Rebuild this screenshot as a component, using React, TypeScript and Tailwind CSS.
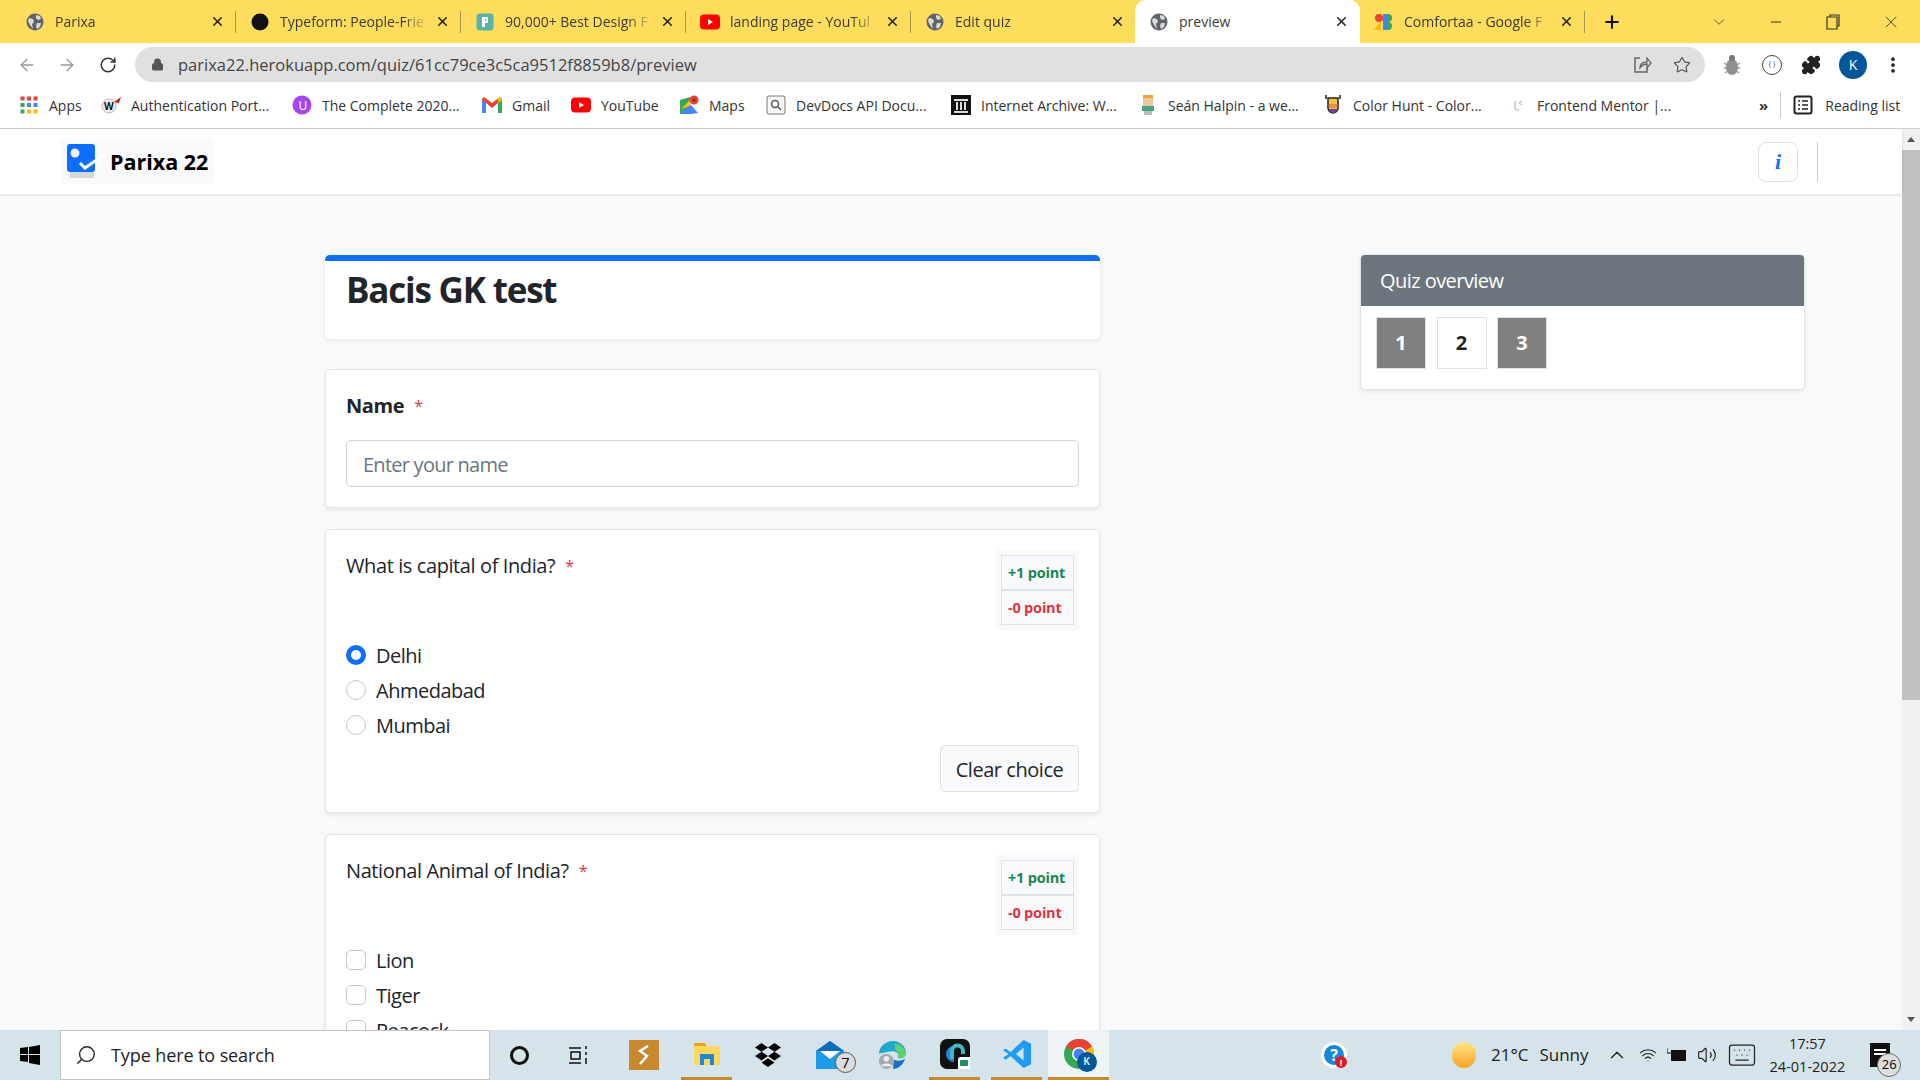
import React from "react";
import { ArrowLeft, ArrowRight, RotateCw, Lock, Star, Puzzle, MoreVertical, X, Plus, ChevronDown, Minus, Search, ChevronUp, Wifi, Volume2, Keyboard } from "lucide-react";

const Globe = () => (
  <svg width="18" height="18" viewBox="0 0 18 18"><circle cx="9" cy="9" r="8.5" fill="#5f6368" /><path d="M3 5l4 1 1 3-2 2 1 5-3-4-2-4zM10 2l4 1 1 3-3 1-2-2zM11 10l4 0-1 4-3 2-1-3z" fill="#d9d9d9" /></svg>
);
const tabs = [
  { t: "Parixa", i: <Globe />, },
  { t: "Typeform: People-Frie", i: <svg width="18" height="18"><circle cx="9" cy="9" r="8.5" fill="#111" /></svg> },
  { t: "90,000+ Best Design F", i: <svg width="18" height="18"><rect x="0.5" y="0.5" width="17" height="17" rx="3" fill="#58b5a5" /><path d="M6 4h6v6H9v4H6zM9 6v2h1V6z" fill="#fff" /></svg> },
  { t: "landing page - YouTul", i: <svg width="20" height="18"><rect width="20" height="15" y="1.5" rx="4" fill="#f00" /><path d="M8 6l5 3-5 3z" fill="#fff" /></svg> },
  { t: "Edit quiz", i: <Globe /> },
];

function Tab({ t, i }: { t: string; i: React.ReactNode }) {
  return (
    <div className="flex h-full w-[225px] shrink-0 items-center py-[11px] pl-[14px] pr-[11px]">
      <div className="flex w-[20px] shrink-0 justify-center">{i}</div>
      <div className="ml-[10px] flex-1 overflow-hidden whitespace-nowrap pb-[1px] text-[14px] text-[#3a3a3a] [mask-image:linear-gradient(90deg,#000_82%,transparent_100%)]">{t}</div>
      <X size={15} strokeWidth={2.5} className="ml-[6px] shrink-0 text-[#222]" />
    </div>
  );
}
function TabSep() { return <div className="-ml-px h-[22px] w-px shrink-0 bg-[#a99650]" />; }

const bookmarks: { t: string; w: string; i: React.ReactNode }[] = [
  { t: "Apps", w: "w-[82px]", i: <svg width="18" height="18" viewBox="0 0 18 18">{[0,1,2].map(r=>[0,1,2].map(c=><rect key={r+"-"+c} x={c*6.5+0.5} y={r*6.5+0.5} width="4" height="4" fill={["#ea4335","#ea4335","#ea4335","#34a853","#4285f4","#4285f4","#34a853","#fbbc05","#fbbc05"][r*3+c]} />))}</svg> },
  { t: "Authentication Port...", w: "w-[191px]", i: <svg width="20" height="18" viewBox="0 0 20 18"><circle cx="8" cy="10" r="7" fill="#eee" stroke="#bbb" /><text x="3" y="14" fontSize="10" fontWeight="700" fill="#111">W</text><path d="M13 6l7-5-2 6z" fill="#c81e1e" /></svg> },
  { t: "The Complete 2020...", w: "w-[190px]", i: <svg width="20" height="20"><circle cx="10" cy="10" r="9.5" fill="#a445ed" /><text x="6.5" y="15" fontSize="12" fill="#fff">U</text></svg> },
  { t: "Gmail", w: "w-[89px]", i: <svg width="20" height="16" viewBox="0 0 20 16"><path d="M0 2v14h4V6l6 5 6-5v10h4V2l-2-2-8 6-8-6z" fill="#ea4335" /><path d="M0 3v13h4V6z" fill="#4285f4" /><path d="M20 3v13h-4V6z" fill="#34a853" /><path d="M16 6l4-3V1l-2-1-2 1.500z" fill="#fbbc05" /></svg> },
  { t: "YouTube", w: "w-[108px]", i: <svg width="20" height="16"><rect width="20" height="15" y="0.5" rx="4" fill="#f00" /><path d="M8 5l5 3-5 3z" fill="#fff" /></svg> },
  { t: "Maps", w: "w-[87px]", i: <svg width="20" height="20" viewBox="0 0 20 20"><path d="M1 5l10-3v16l-10 1z" fill="#34a853" /><path d="M1 19L11 9l8 9-7 1z" fill="#4285f4" /><path d="M2 14L11 5v6z" fill="#fbbc05" /><circle cx="15" cy="5" r="4.500" fill="#ea4335" /><circle cx="15" cy="5" r="1.500" fill="#8b1a12" /></svg> },
  { t: "DevDocs API Docu...", w: "w-[185px]", i: <svg width="20" height="20" viewBox="0 0 20 20"><rect x="1" y="1" width="18" height="18" rx="2" fill="#fafafa" stroke="#777" /><circle cx="9" cy="9" r="3.500" fill="none" stroke="#555" strokeWidth="1.500" /><path d="M12 12l3 3" stroke="#555" strokeWidth="1.500" /></svg> },
  { t: "Internet Archive: W...", w: "w-[187px]", i: <svg width="20" height="20" viewBox="0 0 20 20"><rect width="20" height="20" fill="#111" /><path d="M3 4h14v2H3zM5 7h2v8H5zM9 7h2v8H9zM13 7h2v8h-2zM3 16h14v2H3z" fill="#ddd" /></svg> },
  { t: "Seán Halpin - a we...", w: "w-[185px]", i: <svg width="20" height="20" viewBox="0 0 20 20"><rect x="5" y="0" width="10" height="3" fill="#f3a23a" /><rect x="5" y="3" width="10" height="8" fill="#f0c6a0" /><rect x="4" y="11" width="12" height="5" fill="#43a47e" /><rect x="6" y="16" width="8" height="4" fill="#bbb" /></svg> },
  { t: "Color Hunt - Color...", w: "w-[184px]", i: <svg width="20" height="20" viewBox="0 0 20 20"><path d="M5 3h10v10a5 5 0 0 1-10 0z" fill="#f5c33b" stroke="#222" strokeWidth="1.500" /><path d="M5.800 9h8.400v4H5.800z" fill="#f08a4b" /><path d="M6 14h8a4 4 0 0 1-8 0z" fill="#6c3f99" /><path d="M3 0v4M17 0v4" stroke="#222" strokeWidth="1.500" /></svg> },
  { t: "Frontend Mentor |...", w: "w-[252px]", i: <svg width="20" height="20" viewBox="0 0 20 20"><path d="M8 6v8a5 5 0 0 0 4 1" fill="none" stroke="#b9c8d9" strokeWidth="1.500" /><path d="M12 8l3-2M12 8l3 2" stroke="#9fb6ce" /></svg> },
];

function Req() { return <span className="ml-[10px] align-top text-[16px] font-normal text-[#dc3545]">*</span>; }

function Points() {
  return (
    <div className="flex h-[80px] w-[83px] shrink-0 flex-col justify-center bg-[#f8f9fa] px-[5px] text-[14.5px] font-bold tracking-[-0.2px]">
      <div className="flex h-[35px] items-center border border-[#dee2e6] pl-[6px] whitespace-nowrap text-[#198754]">+1 point</div>
      <div className="flex h-[35px] items-center border border-[#dee2e6] pl-[6px] whitespace-nowrap text-[#dc3545]">-0 point</div>
    </div>
  );
}

function Opt({ kind, label, checked }: { kind: "r" | "c"; label: string; checked?: boolean }) {
  return (
    <div className="flex h-[35px] items-center text-[20px] tracking-[-0.5px] text-[#212529]">
      {kind === "r" ? (
        checked ? <span className="h-[20px] w-[20px] rounded-full border-[5px] border-[#0d6efd] bg-white" /> : <span className="h-[20px] w-[20px] rounded-full border border-[#c4c8cc] bg-white" />
      ) : (
        <span className="h-[20px] w-[20px] rounded-[5px] border border-[#c4c8cc] bg-white" />
      )}
      <span className="ml-[10px] pt-[2px]">{label}</span>
    </div>
  );
}

function QHead({ q }: { q: string }) {
  return (
    <div className="flex justify-between">
      <div className="pt-[2px] text-[20px] leading-[28px] tracking-[-0.4px] text-[#212529]">{q}<Req /></div>
      <Points />
    </div>
  );
}

const cardCls = "rounded-[5px] border border-[#e1e4e8] bg-white px-[20px] shadow-[0_2px_4px_rgba(0,0,0,0.075)]";

function NumBox({ n, dark }: { n: number; dark?: boolean }) {
  return (
    <div className={dark ? "flex h-[52px] w-[50px] items-center justify-center border border-[#dee2e6] bg-[#808080] text-[20px] font-bold text-white" : "flex h-[52px] w-[50px] items-center justify-center border border-[#dee2e6] bg-white text-[20px] font-bold text-[#212529]"}>{n}</div>
  );
}

export default function App() {
  return (
    <div className="flex h-screen w-full flex-col overflow-hidden bg-white font-['Open_Sans',sans-serif] text-[#212529]">
      {/* tab strip */}
      <div className="flex h-[43px] shrink-0 items-center bg-[#ffdd5c] pl-[11px]">
        {tabs.map((t, idx) => (
          <React.Fragment key={t.t}>
            <Tab t={t.t} i={t.i} />
            {idx < 4 ? <TabSep /> : null}
          </React.Fragment>
        ))}
        <div className="-ml-[1px] flex h-full w-[225px] shrink-0 items-center rounded-t-[10px] bg-white pl-[14px] pr-[11px]">
          <div className="flex w-[20px] shrink-0 justify-center"><Globe /></div>
          <div className="ml-[10px] flex-1 pb-[1px] text-[14px] text-[#3a3a3a]">preview</div>
          <X size={15} strokeWidth={2.5} className="text-[#222]" />
        </div>
        <Tab t="Comfortaa - Google F" i={<svg width="20" height="18" viewBox="0 0 20 18"><circle cx="5" cy="5" r="4" fill="#ea4335" /><path d="M0 17L7 8v9z" fill="#fbbc05" /><path d="M9 1h5v16H9z" fill="#4285f4" /><path d="M14 1a4 4 0 0 1 0 8zM14 9a4 4 0 0 1 0 8z" fill="#34a853" /></svg>} />
        <TabSep />
        <Plus size={20} strokeWidth={2.5} className="ml-[17px] text-[#111]" />
        <div className="ml-auto flex items-center text-[#333]">
          <ChevronDown size={18} strokeWidth={1} className="mr-[40px]" />
          <Minus size={16} strokeWidth={1.5} className="mr-[41px]" />
          <svg width="16" height="16" viewBox="0 0 16 16" className="mr-[40px]"><path d="M5 3V1h9v11h-2M2 3h10v12H2z" fill="none" stroke="#333" strokeWidth="1.200" /></svg>
          <X size={20} strokeWidth={1} className="mr-[19px]" />
        </div>
      </div>
      {/* toolbar */}
      <div className="flex h-[43px] shrink-0 items-center bg-white">
        <ArrowLeft size={20} strokeWidth={1.6} className="ml-[17px] text-[#9a9a9a]" />
        <ArrowRight size={20} strokeWidth={1.6} className="ml-[20px] text-[#9a9a9a]" />
        <RotateCw size={18} strokeWidth={2} className="ml-[22px] text-[#333]" />
        <div className="ml-[18px] flex h-[35px] w-[1570px] items-center rounded-full bg-[#e0e0e0] pl-[16px] pr-[14px]">
          <Lock size={13} strokeWidth={2.5} fill="#555" className="text-[#555]" />
          <span className="ml-[14px] pt-[2px] text-[16.5px] text-[#444]">parixa22.herokuapp.com/quiz/61cc79ce3c5ca9512f8859b8/preview</span>
          <svg width="20" height="20" viewBox="0 0 20 20" className="ml-auto"><path d="M8 3H3v14h12v-4" fill="none" stroke="#666" strokeWidth="1.500" /><path d="M8 13c0-4 3-6 7-6V3l4 5-4 5V9c-3 0-5 1-7 4z" fill="none" stroke="#666" strokeWidth="1.300" /></svg>
          <Star size={18} strokeWidth={1.6} className="ml-[21px] text-[#555]" />
        </div>
        <svg width="20" height="22" viewBox="0 0 20 22" className="ml-[17px]"><ellipse cx="10" cy="13" rx="6" ry="8" fill="#8f8f8f" /><circle cx="10" cy="4" r="3" fill="#777" /><path d="M2 9l3 2M2 14h3M3 19l3-2M18 9l-3 2M18 14h-3M17 19l-3-2" stroke="#999" strokeWidth="1.500" /></svg>
        <div className="ml-[20px] flex h-[20px] w-[20px] items-center justify-center rounded-full border border-[#444] text-[7px] text-[#444]">{"{ }"}</div>
        <Puzzle size={20} fill="#222" className="ml-[19px] text-[#222]" />
        <div className="ml-[18px] flex h-[28px] w-[28px] items-center justify-center rounded-full bg-[#01579b] text-[14px] text-white">K</div>
        <MoreVertical size={20} strokeWidth={2.5} className="ml-[16px] text-[#222]" />
      </div>
      {/* bookmarks */}
      <div className="flex h-[43px] shrink-0 items-center border-b border-[#d0d0d0] bg-white pb-[4px] pl-[19px] text-[14px] text-[#333]">
        {bookmarks.map((b) => (
          <div key={b.t} className={"flex items-center whitespace-nowrap " + b.w}>
            <span className="flex w-[20px] shrink-0 justify-center">{b.i}</span>
            <span className="ml-[10px]">{b.t}</span>
          </div>
        ))}
        <span className="text-[15px] font-bold">»</span>
        <div className="ml-[12px] h-[26px] w-px bg-[#ccc]" />
        <svg width="20" height="20" viewBox="0 0 20 20" className="ml-[12px]"><rect x="1.500" y="1.500" width="17" height="17" rx="2" fill="none" stroke="#222" strokeWidth="2" /><path d="M5 6h2M9 6h6M5 10h2M9 10h6M5 14h2M9 14h6" stroke="#222" strokeWidth="1.600" /></svg>
        <span className="ml-[12px]">Reading list</span>
      </div>
      {/* page */}
      <div className="flex min-h-0 flex-1">
        <div className="flex min-w-0 flex-1 flex-col bg-[#f8f9fa]">
          <div className="z-10 flex h-[65px] shrink-0 items-center bg-white pl-[61px] pr-[84px] shadow-[0_1px_3px_rgba(0,0,0,0.12)]">
            <div className="flex h-[45px] w-[153px] items-center rounded-[4px] bg-[#f8f9fa] pl-[6px]">
              <svg width="40" height="36" viewBox="0 0 40 36"><rect x="3" y="28" width="24" height="6" fill="#888" opacity="0.3" /><rect x="0" y="0" width="28" height="28" rx="3" fill="#0d6efd" /><circle cx="8" cy="9" r="4.500" fill="#eef3ff" /><path d="M13 19l5 5 20-14" fill="none" stroke="#fff" strokeWidth="3" /></svg>
              <span className="ml-[3px] pt-[2px] text-[21.5px] font-bold text-black">Parixa 22</span>
            </div>
            <div className="ml-auto flex h-[40px] w-[40px] items-center justify-center rounded-[8px] border border-[#dee2e6]">
              <span className="font-['Liberation_Serif',serif] text-[22px] font-bold italic text-[#0d6efd]">i</span>
            </div>
            <div className="ml-[19px] h-[40px] w-px bg-[#ccc]" />
          </div>
          <div className="flex min-h-0 flex-1 overflow-hidden pl-[325px] pt-[61px]">
            <div className="flex w-[775px] shrink-0 flex-col">
              <div className="h-[84px] shrink-0 rounded-[5px] border-t-[6px] border-[#0d6efd] bg-white px-[21px] shadow-[0_2px_4px_rgba(0,0,0,0.075)]">
                <h1 className="pt-[1px] text-[35px] font-bold leading-[56px] tracking-[-1.2px] text-[#212529]">Bacis GK test</h1>
              </div>
              <div className={"mt-[30px] h-[139px] shrink-0 pt-[20px] " + cardCls}>
                <div className="text-[20px] font-bold leading-[32px] tracking-[-0.4px]">Name<Req /></div>
                <div className="mt-[18px] flex h-[47px] items-center rounded-[5px] border border-[#ced4da] bg-white pl-[16px] pt-[2px] text-[20px] tracking-[-0.75px] text-[#6c757d]">Enter your name</div>
              </div>
              <div className={"mt-[21px] h-[284px] shrink-0 pt-[20px] " + cardCls}>
                <QHead q="What is capital of India?" />
                <div className="mt-[7px]">
                  <Opt kind="r" label="Delhi" checked />
                  <Opt kind="r" label="Ahmedabad" />
                  <Opt kind="r" label="Mumbai" />
                </div>
                <div className="mt-[3px] flex justify-end">
                  <div className="flex h-[47px] w-[139px] items-center justify-center rounded-[5px] border border-[#dee2e6] bg-[#f8f9fa] pt-[2px] text-[20px] tracking-[-0.45px]">Clear choice</div>
                </div>
              </div>
              <div className={"mt-[21px] shrink-0 pt-[20px] pb-[20px] " + cardCls}>
                <QHead q="National Animal of India?" />
                <div className="mt-[7px]">
                  <Opt kind="c" label="Lion" />
                  <Opt kind="c" label="Tiger" />
                  <Opt kind="c" label="Peacock" />
                </div>
              </div>
            </div>
            <div className="-mt-px ml-[260px] h-[136px] w-[445px] shrink-0 overflow-hidden rounded-[5px] border border-[#e1e4e8] bg-white shadow-[0_2px_4px_rgba(0,0,0,0.075)]">
              <div className="-mx-px -mt-px flex h-[52px] items-center bg-[#6c757d] pl-[20px] pt-[2px] text-[20px] tracking-[-0.55px] text-white">Quiz overview</div>
              <div className="flex gap-[10.5px] pl-[15px] pt-[11px]">
                <NumBox n={1} dark />
                <NumBox n={2} />
                <NumBox n={3} dark />
              </div>
            </div>
          </div>
        </div>
        {/* scrollbar */}
        <div className="flex w-[18px] shrink-0 flex-col bg-[#f1f1f1]">
          <div className="flex h-[21px] items-center justify-center"><div className="h-0 w-0 border-x-[4px] border-b-[5px] border-x-transparent border-b-[#555]" /></div>
          <div className="h-[550px] bg-[#c1c1c1]" />
          <div className="mt-auto flex h-[21px] items-center justify-center"><div className="h-0 w-0 border-x-[4px] border-t-[5px] border-x-transparent border-t-[#555]" /></div>
        </div>
      </div>
      {/* taskbar */}
      <div className="flex h-[50px] shrink-0 items-center bg-[#d5e4ea]">
        <svg width="20" height="20" viewBox="0 0 20 20" className="ml-[20px]"><path d="M0 3l8-1v7H0zM9 2l11-2v9H9zM0 10h8v7l-8-1zM9 10h11v10L9 18z" fill="#000" /></svg>
        <div className="ml-[20px] flex h-full w-[430px] items-center border border-[#c4c4c4] bg-white pl-[14px]">
          <Search size={22} strokeWidth={1.5} className="-scale-x-100 text-[#222]" />
          <span className="ml-[14px] text-[18px] tracking-[-0.1px] text-[#222]">Type here to search</span>
        </div>
        <div className="ml-[20px] h-[19px] w-[19px] rounded-full border-[3px] border-[#111]" />
        <svg width="22" height="22" viewBox="0 0 22 22" className="ml-[39px]"><path d="M1 4h12M1 19h12M3 8h9v7H3zM18 2v3M18 8v3M18 14v6" fill="none" stroke="#111" strokeWidth="1.500" /></svg>
        <div className="ml-[39px] flex h-[30px] w-[30px] items-center justify-center bg-[#c8882e]">
          <svg width="12" height="20" viewBox="0 0 12 20"><path d="M10 1L2 6l7 5-7 8" fill="none" stroke="#fff" strokeWidth="2.500" /></svg>
        </div>
        <div className="ml-[22px] flex h-full w-[51px] items-center justify-center border-b-[3px] border-[#c8882e]">
          <svg width="28" height="26" viewBox="0 0 28 26"><path d="M1 2h11l2 3H1z" fill="#e8a317" /><rect x="1" y="5" width="26" height="19" rx="1" fill="#ffd75e" /><path d="M7 24V13h14v11h-4v-6h-6v6z" fill="#1e88d6" /></svg>
        </div>
        <svg width="30" height="26" viewBox="0 0 24 24" className="ml-[21px]"><path d="M6 1l6 4-6 4-6-4zM18 1l6 4-6 4-6-4zM6 9l6 4-6 4-6-4zM18 9l6 4-6 4-6-4zM12 15l6 4-6 4-6-4z" fill="#000" /></svg>
        <div className="relative ml-[32px] flex h-[30px] w-[32px] items-center">
          <svg width="30" height="30" viewBox="0 0 30 30"><path d="M1 11L15 1l14 10v18H1z" fill="#1e9be6" /><path d="M15 1l14 10H1z" fill="#0f6cbd" /><path d="M5 11h20l-10 8z" fill="#fff" /></svg>
          <span className="absolute -bottom-[3px] -right-[9px] flex h-[21px] w-[21px] items-center justify-center rounded-full border border-[#555] bg-[#ddd] text-[14px] text-black">7</span>
        </div>
        <svg width="30" height="30" viewBox="0 0 32 32" className="ml-[30px]"><path d="M2 14C3 6 10 1 17 1c8 0 14 6 14 13 0 5-6 6-9 5 2-3 0-7-5-7-7 0-12 3-15 2z" fill="#1fa8c9" /><path d="M19 4c6 0 11 5 12 10 0 4-5 6-9 5 2-3 1-7-3-9z" fill="#5ed36f" /><path d="M18 21c4 2 9 1 12-1-2 6-7 11-13 11z" fill="#1d6fc4" /><circle cx="10" cy="23" r="8" fill="#a2abb0" /><circle cx="10" cy="20" r="3" fill="#eee" /><path d="M4 28c1-4 11-4 12 0z" fill="#eee" /></svg>
        <div className="ml-[22px] flex h-full w-[51px] items-center justify-center border-b-[3px] border-[#c8882e]">
          <div className="relative flex h-[30px] w-[30px] items-center justify-center rounded-[7px] bg-[#111]">
            <svg width="24" height="24" viewBox="0 0 24 24"><path d="M11 6a5 5 0 1 0 0 12" fill="none" stroke="#2a7de1" strokeWidth="4" /><path d="M9 17V9a5 5 0 0 1 11 0v3" fill="none" stroke="#3fb8c7" strokeWidth="4" /></svg>
            <div className="absolute bottom-0 right-0 flex h-[12px] w-[12px] items-center justify-center rounded-tl-[3px] bg-white"><div className="h-[6px] w-[8px] rounded-[1px] bg-[#1f8f63]" /></div>
          </div>
        </div>
        <div className="ml-[11px] flex h-full w-[51px] items-center justify-center border-b-[3px] border-[#c8882e]">
          <svg width="30" height="30" viewBox="0 0 32 32"><path d="M23 1l8 4v22l-8 4L9 18l-5 4-3-2 6-4-6-4 3-2 5 4z" fill="#1f9cf0" /><path d="M23 9v14l-8-7z" fill="#d5e4ea" /></svg>
        </div>
        <div className="ml-[6px] flex h-full w-[61px] items-center justify-center border-b-[3px] border-[#c8882e] bg-[#eef3f5]">
          <div className="relative h-[30px] w-[30px]">
            <svg width="30" height="30" viewBox="0 0 30 30"><circle cx="15" cy="15" r="15" fill="#34a853" /><path d="M15 15L2 7.500A15 15 0 0 1 28 7.500z" fill="#ea4335" /><path d="M15 15l13-7.500A15 15 0 0 1 15 30z" fill="#fbbc05" /><circle cx="15" cy="15" r="7" fill="#fff" /><circle cx="15" cy="15" r="5.500" fill="#4285f4" /></svg>
            <span className="absolute -bottom-[3px] -right-[3px] flex h-[20px] w-[20px] items-center justify-center rounded-full bg-[#01579b] text-[10px] font-bold text-[#cfe3f5]">K</span>
          </div>
        </div>
        <div className="relative ml-[212px] flex h-[26px] w-[26px] items-center justify-center rounded-full border-[3px] border-white bg-[#1487d6] text-[16px] font-bold text-white">
          ?
          <span className="absolute -bottom-[3px] -right-[3px] flex h-[12px] w-[12px] items-center justify-center rounded-full bg-[#e01b24] text-[9px] leading-none">!</span>
        </div>
        <div className="ml-[105px] h-[26px] w-[24px] rounded-full bg-gradient-to-b from-[#ffe680] to-[#f9a21a]" />
        <span className="ml-[15px] whitespace-nowrap text-[17px] text-[#222]">21°C</span>
        <span className="ml-[11px] text-[17px] text-[#222]">Sunny</span>
        <ChevronUp size={22} strokeWidth={1.5} className="ml-[17px] text-[#222]" />
        <Wifi size={18} strokeWidth={1.6} className="ml-[11px] text-[#222]" />
        <svg width="20" height="18" viewBox="0 0 20 18" className="ml-[10px]"><rect x="4" y="4" width="15" height="11" fill="#111" /><path d="M0 2v5h4" stroke="#111" fill="none" /></svg>
        <Volume2 size={20} strokeWidth={1.4} className="ml-[10px] text-[#222]" />
        <Keyboard size={30} strokeWidth={1} className="ml-[10px] text-[#222]" />
        <div className="ml-[13px] flex flex-col items-center text-[14.5px] leading-[23px] text-[#222]">
          <span>17:57</span>
          <span>24-01-2022</span>
        </div>
        <div className="relative ml-[25px] h-[24px] w-[20px] bg-[#111]">
          <div className="mx-[4px] mt-[6px] h-[2px] bg-white" />
          <div className="mx-[4px] mt-[2px] h-[2px] bg-white" />
          <span className="absolute -bottom-[10px] left-[7px] flex h-[24px] w-[24px] items-center justify-center rounded-full border border-[#666] bg-[#ddd] text-[13px] text-black">26</span>
        </div>
      </div>
    </div>
  );
}
